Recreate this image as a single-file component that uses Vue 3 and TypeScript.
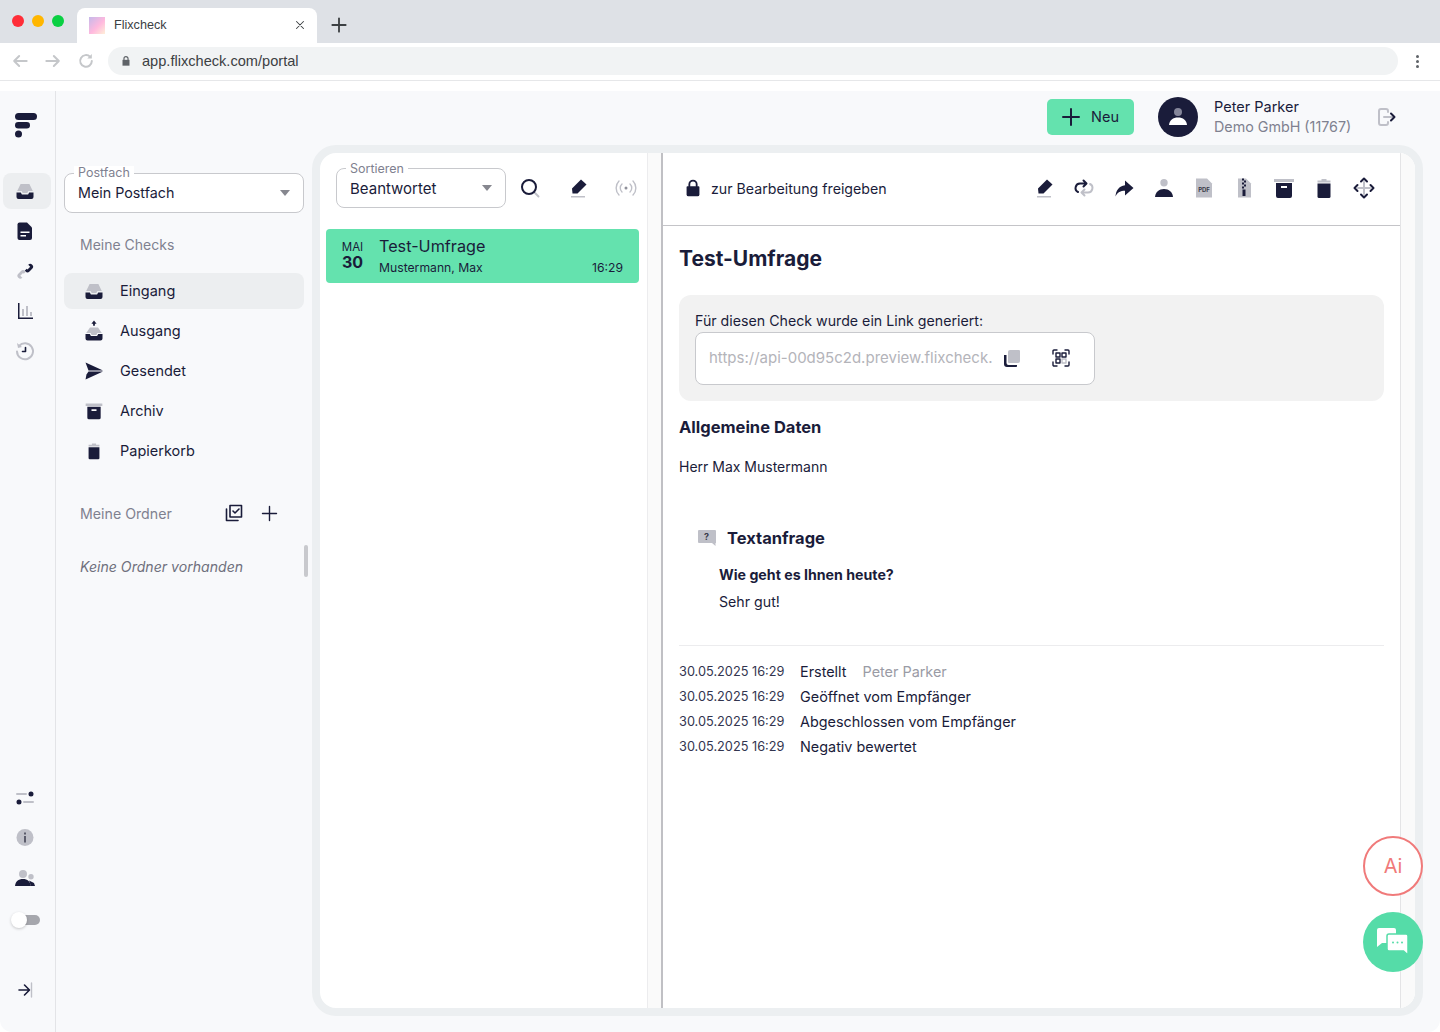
<script setup lang="ts">
import { h } from 'vue'

const D = '#1a1c3a'
const G = '#bfc0c8'
const paths: Record<string, [string, string][]> = {
  inbox: [['M7.600 5h8.800l3.400 7h-4.400l-1.100 2H9.700l-1.100-2H4.200z', G], ['M3.500 13.400h4.300l1.100 2h6.200l1.100-2h4.300V18a2 2 0 0 1-2 2h-13a2 2 0 0 1-2-2z', D]],
  outbox: [['M12 1.500l2.600 3.200h-1.700v2h-1.800v-2H9.400z', D], ['M8 8.500h8l3.800 5.500h-4.400l-1 2H9.600l-1-2H4.200z', G], ['M3.500 15h4.300l1.100 2h6.200l1.100-2h4.300v4.500a2 2 0 0 1-2 2h-13a2 2 0 0 1-2-2z', D]],
  send: [['M3.500 3.500L21 11.500H6.500z', D], ['M6.500 12.500H21L3.500 20.500 4.500 15.500z', D]],
  archive: [['M2 3h20v3H2z', G], ['M4 7h16v13a2 2 0 0 1-2 2H6a2 2 0 0 1-2-2zM9 10v2h6v-2z', D]],
  trash: [['M9.500 3h5v1.500h4v2h-13v-2h4z', G], ['M5.500 7.500h13v13a1.500 1.500 0 0 1-1.500 1.500H7a1.500 1.500 0 0 1-1.500-1.500z', D]],
  doc: [['M6.500 3.500H14l5 5v10.500a2 2 0 0 1-2 2H6.500a2 2 0 0 1-2-2V5.500a2 2 0 0 1 2-2z', D], ['M7.500 12.500h9V14h-9zM7.500 16h5.500v1.500H7.500z', '#fff']],
  link: [['M13.500 7.500l1.700-1.700a2.800 2.800 0 0 1 4 4l-2.700 2.700a2.800 2.800 0 0 1-4 0l-.8-.8 2-2 .8.800 2.700-2.700-2-2-.4.400z', D], ['M11 17l-1.700 1.700a2.800 2.800 0 0 1-4-4l2.700-2.700a2.800 2.800 0 0 1 4 0l.8.800-2 2-.8-.8-2.700 2.700 2 2 .4-.4z', G]],
  chart: [['M9 10h2v7H9zM13 7h2v10h-2zM17 13h2v4h-2z', G], ['M5 4h1.500v14.500H20V20H5z', D]],
  edit: [['M15 3.500l5.500 5-9 9H6.500l-.5-5z', D], ['M5 20h14v1.500H5z', G]],
  repeat: [['M18 8a4.500 4.500 0 0 1-2 8.500h-6M12.500 13.500l-3 3 3 3', 'sG'], ['M6 16a4.500 4.500 0 0 1 2-8.500h6M11.500 4.500l3 3-3 3', 'sD']],
  forward: [['M13 4.500l8.500 7.500-8.500 7.500v-4.700C8.500 14.800 5.500 16.200 3.500 20.500c.4-6 3.500-10.500 9.500-11.300z', D]],
  person: [['M12 3a3.700 3.700 0 1 1 0 7.400A3.700 3.700 0 0 1 12 3z', G], ['M3 21c.4-5 4-8 9-8s8.600 3 9 8z', D]],
  zip: [['M6 2.500h8l5 5v14H6z', G], ['M10 2.500h2v2h-2zM12 4.500h2v2h-2zM10 6.500h2v2h-2zM12 8.500h2v2h-2zM10 10.500h2v2h-2zM10.500 13.500h3V20h-3z', D]],
  move: [['M12 6v12M6 12h12', 'sG'], ['M9 5.500L12 2.500l3 3M9 18.500L12 21.500l3-3M5.500 9L2.500 12l3 3M18.500 9L21.500 12l-3 3', 'sD']],
  lock: [['M8 10V8a4 4 0 0 1 8 0v2', 'sD'], ['M6 10h12a1 1 0 0 1 1 1v8a2 2 0 0 1-2 2H7a2 2 0 0 1-2-2v-8a1 1 0 0 1 1-1z', D]],
  plus: [['M12 4v16M4 12h16', 'sD']],
  thinplus: [['M12 4v16M4 12h16', 'sT3']],
  checks: [['M8 4.500h11.500V16H8z', 'sT3'], ['M4.500 8v11.500H16', 'sT3'], ['M11 10l2 2 4-4', 'sT3']],
  copy: [['M10 4h9a1 1 0 0 1 1 1v10a2 2 0 0 1-2 2H9a1 1 0 0 1-1-1V6a2 2 0 0 1 2-2z', G], ['M4 9h2.500v8a2 2 0 0 0 2 2H17v1.500c-.5.500-1 .500-2 .500H7a3 3 0 0 1-3-3z', D]],
  qr: [['M4 8V5a1 1 0 0 1 1-1h3M16 4h3a1 1 0 0 1 1 1v3M20 16v3a1 1 0 0 1-1 1h-3M8 20H5a1 1 0 0 1-1-1v-3', 'sQ'], ['M7 7h4v4H7zM13 7h4v4h-4zM7 13h4v4H7z', 'sQ'], ['M13 13h4v4h-4z', 'sQG']],
  search: [['M16 16l4.500 4.500', 'sG'], ['M11 4a7 7 0 1 1 0 14 7 7 0 0 1 0-14z', 'sD']],
  radio: [['M8 8a5.500 5.500 0 0 0 0 8M16 8a5.500 5.500 0 0 1 0 8M5 5a10 10 0 0 0 0 14M19 5a10 10 0 0 1 0 14', 'sQG'], ['M12 10.500a1.500 1.500 0 1 1 0 3 1.500 1.500 0 0 1 0-3z', '#8f909a']],
  history: [['M6 7a8 8 0 1 1-2 5.500', 'sG'], ['M4 4l1 5 4-1z', G], ['M12.500 8.500v4h-3', 'sT3']],
  sliders: [['M4 8h9M11 16h9', 'sG'], ['M18 5.500a2.500 2.500 0 1 1 0 5 2.500 2.500 0 0 1 0-5zM6 13.500a2.500 2.500 0 1 1 0 5 2.500 2.500 0 0 1 0-5z', D]],
  info: [['M12 3a8.500 8.500 0 1 1 0 17 8.500 8.500 0 0 1 0-17z', G], ['M11 6.500h2v2h-2zM11 10h2v6.500h-2z', '#5b5c6b']],
  people: [['M10 4a4 4 0 1 1 0 8 4 4 0 0 1 0-8zM18 8a2.700 2.700 0 1 1 0 5.400A2.700 2.700 0 0 1 18 8z', G], ['M2 20c.3-4.500 3.500-7 8-7s7 2.500 8 7z', D], ['M16 14.500l5 2.500 1 3h-4z', D]],
  collapse: [['M6 12h10M11.500 7l5 5-5 5', 'sT3'], ['M18.500 5v14', 'sQG']],
  logout: [['M14 7V6a2 2 0 0 0-2-2H7a2 2 0 0 0-2 2v12a2 2 0 0 0 2 2h5a2 2 0 0 0 2-2v-1', 'sG'], ['M10 12h10', 'sG'], ['M17 8.500l3.500 3.500-3.500 3.500', 'sD']],
  back: [['M20 12H5M11 6l-6 6 6 6', 'sC']],
  next: [['M4 12h15M13 6l6 6-6 6', 'sC']],
  reload: [['M19 12a7 7 0 1 1-2-5', 'sC'], ['M19 3.500V9h-5.500z', '#c5c7ca']],
  close: [['M6 6l12 12M18 6L6 18', 'sT']],
  tabplus: [['M12 4v16M4 12h16', 'sT2']],
  chromeLock: [['M8.500 10V8a3.500 3.500 0 0 1 7 0v2', 'sL'], ['M6 10h12v10H6z', '#5f6368']],
}
const strokes: Record<string, [string, number]> = {
  sD: [D, 2], sG: [G, 2], sQ: [D, 1.4], sQG: [G, 1.4], sT3: [D, 1.6], sC: ['#c5c7ca', 2.4], sT: ['#3c4043', 1.8], sT2: ['#3c4043', 2.2], sL: ['#5f6368', 2],
}
const Ico = (props: { n: string; s?: number }) => {
  const size = props.s ?? 24
  return h('svg', { viewBox: '0 0 24 24', width: size, height: size, fill: 'none', style: 'display:block;flex:none' },
    paths[props.n].map(([d, c]) => {
      const st = strokes[c]
      return st
        ? h('path', { d, stroke: st[0], 'stroke-width': st[1], 'stroke-linecap': 'round', 'stroke-linejoin': 'round' })
        : h('path', { d, fill: c, 'fill-rule': 'evenodd' })
    }))
}
Ico.props = ['n', 's']

const railTop = ['inbox', 'doc', 'link', 'chart', 'history']
const railBottom = ['sliders', 'info', 'people']
const nav = [
  { n: 'inbox', t: 'Eingang', on: true, s: 24 },
  { n: 'outbox', t: 'Ausgang', on: false, s: 24 },
  { n: 'send', t: 'Gesendet', on: false, s: 24 },
  { n: 'archive', t: 'Archiv', on: false, s: 20 },
  { n: 'trash', t: 'Papierkorb', on: false, s: 20 },
]
const tools = ['edit', 'repeat', 'forward', 'person', 'pdf', 'zip', 'archive', 'trash', 'move']
const log = [
  { t: 'Erstellt', who: 'Peter Parker' },
  { t: 'Geöffnet vom Empfänger', who: '' },
  { t: 'Abgeschlossen vom Empfänger', who: '' },
  { t: 'Negativ bewertet', who: '' },
]
</script>

<template>
  <div class="page">
    <div class="tabs">
      <div class="lights"><i class="red"></i><i class="amber"></i><i class="green"></i></div>
      <div class="tab">
        <span class="favicon"></span>
        <span class="tab-title">Flixcheck</span>
        <Ico n="close" :s="14" />
      </div>
      <span class="tab-add"><Ico n="tabplus" :s="20" /></span>
    </div>
    <div class="toolbar">
      <div class="nav-btns"><Ico n="back" :s="20" /><Ico n="next" :s="20" /><Ico n="reload" :s="20" /></div>
      <div class="url"><Ico n="chromeLock" :s="14" /><span>app.flixcheck.com/portal</span></div>
      <div class="dots"><i></i><i></i><i></i></div>
    </div>
    <div class="gap"></div>

    <div class="app">
      <aside class="rail">
        <svg class="logo" width="24" height="26" viewBox="0 0 24 26">
          <rect x="1" y="1" width="22" height="7" rx="3.500" fill="#1a1c3a" />
          <rect x="1" y="10" width="15" height="6.500" rx="3.250" fill="#1a1c3a" />
          <circle cx="4.500" cy="22" r="3.500" fill="#1a1c3a" />
        </svg>
        <div class="rail-group">
          <div v-for="(r, i) in railTop" :key="r" class="rail-btn" :class="{ on: i === 0 }"><Ico :n="r" /></div>
        </div>
        <div class="rail-bottom">
          <div v-for="r in railBottom" :key="r" class="rail-btn"><Ico :n="r" /></div>
          <div class="switch"><i></i></div>
          <div class="rail-btn collapse"><Ico n="collapse" /></div>
        </div>
      </aside>

      <div class="content">
        <header class="head">
          <button class="new"><Ico n="plus" /><span>Neu</span></button>
          <div class="avatar">
            <svg width="24" height="24" viewBox="0 0 24 24">
              <circle cx="12" cy="7" r="4" fill="#85869a" />
              <path d="M3 20c.500-5 4-7.500 9-7.500s8.500 2.500 9 7.500z" fill="#fff" />
            </svg>
          </div>
          <div class="user"><b>Peter Parker</b><span>Demo GmbH (11767)</span></div>
          <span class="logout"><Ico n="logout" /></span>
        </header>

        <div class="body">
          <section class="side">
            <div class="field wide">
              <label>Postfach</label>
              <span>Mein Postfach</span><i class="caret"></i>
            </div>
            <h4 class="sec">Meine Checks</h4>
            <nav class="nav">
              <a v-for="n in nav" :key="n.t" :class="{ on: n.on }"><span class="nav-ico"><Ico :n="n.n" :s="n.s" /></span><span class="nav-text">{{ n.t }}</span></a>
            </nav>
            <div class="folders">
              <h4>Meine Ordner</h4>
              <Ico n="checks" />
              <Ico n="thinplus" :s="21" />
            </div>
            <div class="none-row">
              <em>Keine Ordner vorhanden</em>
              <i class="bar"></i>
            </div>
          </section>

          <main class="panel">
            <section class="list">
              <div class="list-head">
                <div class="field sort">
                  <label>Sortieren</label>
                  <span>Beantwortet</span><i class="caret"></i>
                </div>
                <Ico n="search" />
                <Ico n="edit" />
                <Ico n="radio" />
              </div>
              <article class="card">
                <div class="date"><small>MAI</small><b>30</b></div>
                <div class="card-main">
                  <h3>Test-Umfrage</h3>
                  <div class="card-sub"><span>Mustermann, Max</span><span>16:29</span></div>
                </div>
              </article>
            </section>
            <div class="strip"></div>
            <section class="detail">
              <div class="detail-head">
                <Ico n="lock" :s="22" />
                <span class="release">zur Bearbeitung freigeben</span>
                <div class="tools">
                  <template v-for="t in tools" :key="t">
                    <svg v-if="t === 'pdf'" width="24" height="24" viewBox="0 0 24 24">
                      <path d="M4 2.500h11l5 5v14H4z" fill="#bfc0c8" />
                      <text x="12" y="16" text-anchor="middle" class="pdf">PDF</text>
                    </svg>
                    <Ico v-else :n="t" />
                  </template>
                </div>
              </div>
              <div class="detail-body">
                <h2>Test-Umfrage</h2>
                <div class="linkbox">
                  <p>Für diesen Check wurde ein Link generiert:</p>
                  <div class="linkfield">
                    <span class="urltext">https://api-00d95c2d.preview.flixcheck.</span>
                    <Ico n="copy" />
                    <Ico n="qr" />
                  </div>
                </div>
                <h3 class="sub">Allgemeine Daten</h3>
                <p class="herr">Herr Max Mustermann</p>
                <div class="q-title">
                  <svg width="20" height="18" viewBox="0 0 20 18">
                    <path d="M2 1h16a1 1 0 0 1 1 1v12h-.500v3L15 14H2a1 1 0 0 1-1-1V2a1 1 0 0 1 1-1z" fill="#bfc0c8" />
                    <text x="9.500" y="10.500" text-anchor="middle" class="q">?</text>
                  </svg>
                  <h3>Textanfrage</h3>
                </div>
                <p class="q-text">Wie geht es Ihnen heute?</p>
                <p class="q-ans">Sehr gut!</p>
                <div class="log">
                  <div v-for="l in log" :key="l.t" class="log-row">
                    <span class="stamp">30.05.2025 16:29</span>
                    <span>{{ l.t }}</span>
                    <span v-if="l.who" class="who">{{ l.who }}</span>
                  </div>
                </div>
              </div>
            </section>
            <div class="strip edge"></div>
          </main>
        </div>
      </div>

      <button class="ai">Ai</button>
      <button class="chat">
        <svg width="34" height="30" viewBox="0 0 34 30">
          <path d="M3 1h15a2 2 0 0 1 2 2v11a2 2 0 0 1-2 2H6l-5 4V3a2 2 0 0 1 2-2z" fill="#fff" />
          <path d="M13 7h17a2 2 0 0 1 2 2v14.500V28l-4.500-4H13a2 2 0 0 1-2-2V9a2 2 0 0 1 2-2z" fill="#fff" stroke="#55dca8" stroke-width="1.500" />
          <circle cx="17" cy="15.500" r="1" fill="#55dca8" /><circle cx="21.500" cy="15.500" r="1" fill="#55dca8" /><circle cx="26" cy="15.500" r="1" fill="#55dca8" />
        </svg>
      </button>
    </div>
  </div>
</template>

<style scoped>
.page { width: 1440px; height: 1032px; display: flex; flex-direction: column; overflow: hidden; background: #fff; color: #1a1c3a; font-family: Inter, "Noto Sans", sans-serif; font-size: 14.5px; position: relative; }
.tabs { height: 43px; flex: none; background: #dee1e6; display: flex; align-items: flex-end; }
.lights { display: flex; gap: 8px; width: 77px; padding: 0 0 16px 12px; box-sizing: border-box; }
.lights i { width: 12px; height: 12px; border-radius: 50%; }
.red { background: #ff2d38; } .amber { background: #ffb600; } .green { background: #0ad043; }
.tab { width: 240px; height: 35px; background: #fff; border-radius: 8px 8px 0 0; display: flex; align-items: center; padding: 0 10px 1px 12px; box-sizing: border-box; }
.favicon { width: 16px; height: 17px; background: linear-gradient(135deg, #c5b9ea, #ffb9de 55%, #fff0d8); margin-right: 9px; }
.tab-title { flex: 1; font-size: 12.600px; color: #3c4043; font-family: "Liberation Sans", sans-serif; }
.tab-add { margin: 0 0 8px 12px; }
.toolbar { height: 38px; box-sizing: border-box; flex: none; display: flex; align-items: center; border-bottom: 1px solid #e6e7e9; padding-bottom: 1px; }
.nav-btns { width: 108px; flex: none; display: flex; gap: 13px; padding-left: 10px; box-sizing: border-box; }
.url { flex: none; width: 1290px; height: 28px; background: #f1f3f4; border-radius: 14px; display: flex; align-items: center; gap: 9px; padding-left: 11px; box-sizing: border-box; font-family: "Liberation Sans", sans-serif; font-size: 14.600px; color: #3c4043; }
.dots { margin-left: 18px; display: flex; flex-direction: column; gap: 2px; }
.dots i { width: 3px; height: 3px; border-radius: 50%; background: #5f6368; }
.gap { height: 10px; flex: none; }

.app { flex: 1; display: flex; background: #f8f9fb; min-height: 0; position: relative; border-radius: 0 0 12px 12px; }
.rail { width: 56px; flex: none; border-right: 1px solid #e3e4e7; box-sizing: border-box; display: flex; flex-direction: column; align-items: flex-start; padding: 20px 0 24px 3px; }
.logo { margin: 1px 0 0 11px; }
.rail-group { margin-top: 35px; display: flex; flex-direction: column; gap: 4px; }
.rail-btn { width: 48px; height: 36px; box-sizing: border-box; padding-right: 4px; display: flex; align-items: center; justify-content: center; border-radius: 8px; }
.rail-btn.on { background: #eceef0; }
.rail-bottom { margin-top: auto; display: flex; flex-direction: column; gap: 4px; }
.switch { width: 28px; height: 10px; background: #a6a7ad; border-radius: 5px; margin: 15px 0 15px 9px; position: relative; }
.switch i { position: absolute; left: -1px; top: -3px; width: 16px; height: 16px; border-radius: 50%; background: #fff; box-shadow: 0 1px 3px rgba(0,0,0,.2); }
.collapse { margin-top: 28px; }

.content { flex: 1; min-width: 0; display: flex; flex-direction: column; }
.head { height: 54px; box-sizing: border-box; flex: none; display: flex; align-items: center; padding: 0 42px 2px 0; justify-content: flex-end; }
.new { width: 87px; height: 36px; border: 0; border-radius: 5px; background: #64e2ae; color: #1a1c3a; font: inherit; display: flex; align-items: center; gap: 8px; padding: 0 0 0 12px; }
.new span { margin-bottom: 2px; }
.avatar { width: 40px; height: 40px; border-radius: 50%; background: #1a1c3a; display: flex; align-items: center; justify-content: center; margin-left: 24px; }
.user { width: 155px; margin-left: 16px; display: flex; flex-direction: column; gap: 2px; line-height: 18px; }
.user b { font-weight: 400; }
.user span { color: #7f8190; font-size: 14.300px; }
.logout { margin-left: 5px; }

.body { flex: 1; display: flex; min-height: 0; padding-bottom: 16px; }
.side { width: 256px; flex: none; padding: 28px 8px 0; box-sizing: border-box; }
.field { position: relative; height: 40px; background: #fff; border: 1px solid #c8c9cd; border-radius: 8px; display: flex; align-items: center; padding: 0 13px; box-sizing: border-box; font-size: 15px; }
.field label { position: absolute; left: 9px; top: -8px; padding: 0 4px; font-size: 12.500px; line-height: 14px; color: #7f8190; background: #fff; }
.field span { flex: 1; }
.caret { width: 0; height: 0; border: 5.500px solid transparent; border-top: 6px solid #86878f; border-bottom: 0; }
.wide { width: 240px; font-size: 14.300px; }
.wide span { margin-bottom: 2px; }
.sec, .folders h4 { margin: 0; font-weight: 400; font-size: 14px; color: #7f8190; }
.sec { padding: 23px 0 0 16px; line-height: 18px; }
.nav { margin-top: 19px; display: flex; flex-direction: column; gap: 4px; }
.nav a { height: 36px; display: flex; align-items: center; gap: 14px; padding-left: 18px; border-radius: 8px; }
.nav a.on { background: #eceef0; }
.nav-ico { width: 24px; height: 24px; display: flex; align-items: center; justify-content: center; }
.nav-text { margin-bottom: 2px; }
.folders { display: flex; align-items: center; margin: 32px 0 0 16px; height: 24px; }
.folders h4 { flex: 1; font-size: 14.200px; }
.folders svg:last-child { margin: 0 24px 0 13px; }
.none-row { display: flex; align-items: center; justify-content: space-between; margin: 25px -4px 0 16px; height: 32px; }
.none-row em { color: #6f707d; font-size: 14.100px; }
.bar { width: 4px; height: 32px; background: #c8c9cd; border-radius: 2px; margin-top: -10px; }

.panel { flex: 1; min-width: 0; margin-right: 17px; background: #fff; border: 8px solid #eceff1; border-radius: 24px; display: flex; overflow: hidden; }
.list { width: 328px; flex: none; border-right: 1px solid #ececee; box-sizing: border-box; padding: 15px 8px 0 6px; }
.list-head { display: flex; align-items: center; gap: 24px; padding-left: 10px; }
.sort { width: 170px; flex: none; margin-right: -12px; }
.sort label { top: -7px; }
.card { margin-top: 21px; height: 54px; box-sizing: border-box; background: #64e2ae; border-radius: 4px; display: flex; align-items: center; padding: 0 16px 2px 0; }
.date { width: 53px; flex: none; display: flex; flex-direction: column; align-items: center; line-height: 15px; }
.date small { font-size: 11.500px; }
.date b { font-size: 16px; font-weight: 700; }
.card-main { flex: 1; min-width: 0; }
.card-main h3 { margin: 0; font-size: 16.200px; font-weight: 400; line-height: 24px; }
.card-sub { display: flex; justify-content: space-between; font-size: 12.200px; line-height: 18px; margin-top: 1px; }
.strip { width: 13px; flex: none; background: #fafafa; border-right: 2px solid #c0c0c4; }
.strip.edge { width: 15px; border-right: 0; border-left: 1px solid #e4e4e6; box-sizing: border-box; }
.detail { flex: 1; min-width: 0; display: flex; flex-direction: column; font-size: 14.200px; }
.detail-head { height: 73px; flex: none; box-sizing: border-box; border-bottom: 1px solid #c4c4c8; display: flex; align-items: center; padding: 0 24px 2px 19px; }
.release { margin-left: 7px; flex: 1; }
.tools { display: flex; gap: 16px; }
.pdf { font: 700 6px Inter, sans-serif; fill: #3b3c4a; }
.detail-body { padding: 0 16px; }
.detail-body h2 { margin: 19px 0 0; font-size: 21px; line-height: 28px; font-weight: 700; }
.linkbox { margin-top: 22px; height: 106px; background: #f2f2f2; border-radius: 12px; padding: 16px 16px 0; box-sizing: border-box; }
.linkbox p { margin: 0; line-height: 20px; }
.linkfield { width: 400px; height: 53px; margin-top: 1px; box-sizing: border-box; background: #fff; border: 1px solid #c8c9cd; border-radius: 8px; display: flex; align-items: center; padding: 0 21px 1px 13px; }
.urltext { width: 284px; flex: none; overflow: hidden; white-space: nowrap; color: #b4b4ba; margin-right: 7px; font-size: 15px; margin-bottom: 2px; }
.linkfield svg:last-child { margin-left: 25px; }
.sub { margin: 15px 0 0; font-size: 16.500px; line-height: 22px; font-weight: 700; }
.herr { margin: 18px 0 0; line-height: 22px; font-size: 14px; }
.q-title { display: flex; align-items: center; gap: 10px; margin: 48px 0 0 18px; height: 24px; }
.q-title h3 { margin: 0; font-size: 16.500px; font-weight: 700; }
.q { font: 700 9px Inter, sans-serif; fill: #3b3c4a; }
.q-text { margin: 15px 0 0 40px; font-weight: 700; line-height: 20px; }
.q-ans { margin: 7px 0 0 40px; line-height: 20px; }
.log { margin-top: 33px; padding-top: 14px; border-top: 1px solid #ececee; display: flex; flex-direction: column; gap: 3px; font-size: 14.400px; }
.log-row { display: flex; height: 22px; align-items: center; }
.stamp { width: 121px; flex: none; font-size: 12.750px; color: #33354f; padding-top: 1px; }
.who { margin-left: 16px; color: #9a9ba5; }

.ai { position: absolute; right: 17px; top: 745px; width: 60px; height: 60px; box-sizing: border-box; border: 2px solid #f07a7a; border-radius: 50%; background: #fff; color: #f07a7a; font: 400 20px Inter, sans-serif; padding: 0; }
.chat { position: absolute; right: 17px; top: 821px; width: 60px; height: 60px; border: 0; border-radius: 50%; background: #55dca8; display: flex; align-items: center; justify-content: center; padding: 0; }
</style>

<style>
html, body { margin: 0; background: #fff; }
</style>
